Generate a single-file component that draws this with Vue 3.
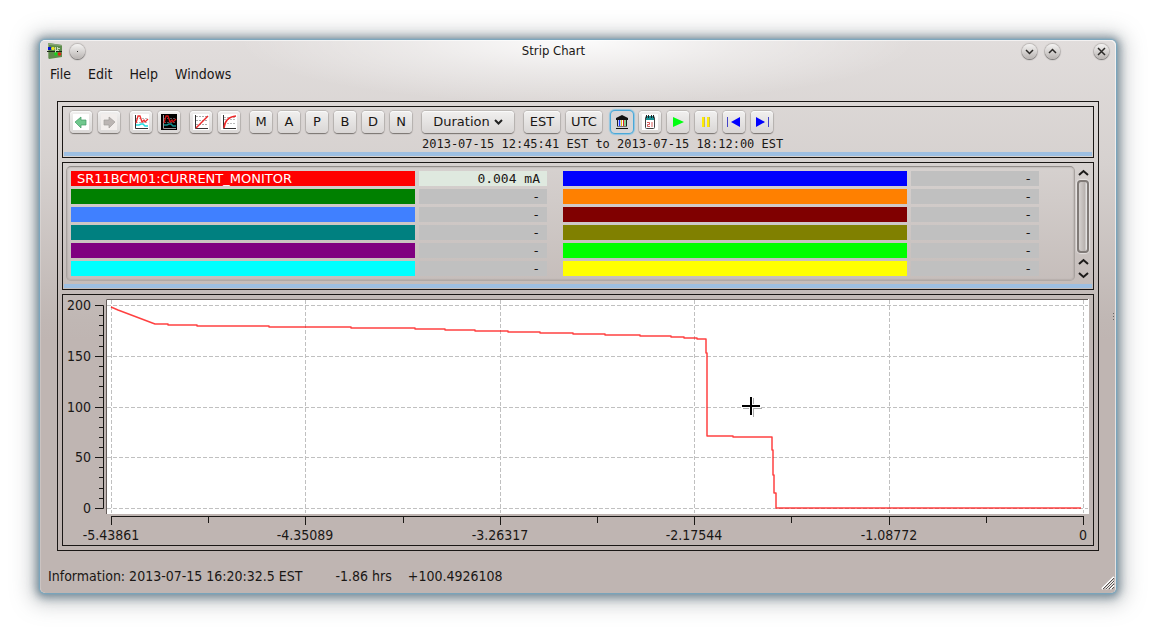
<script setup>
import { ref } from 'vue'

const menus = ['File', 'Edit', 'Help', 'Windows']
const modes = ['M', 'A', 'P', 'B', 'D', 'N']
const columns = [
  [
    { name: 'SR11BCM01:CURRENT_MONITOR', color: '#ff0000', value: '0.004 mA' },
    { name: '', color: '#008000', value: '-' },
    { name: '', color: '#4080ff', value: '-' },
    { name: '', color: '#008080', value: '-' },
    { name: '', color: '#800080', value: '-' },
    { name: '', color: '#00ffff', value: '-' },
  ],
  [
    { name: '', color: '#0000ff', value: '-' },
    { name: '', color: '#ff8000', value: '-' },
    { name: '', color: '#800000', value: '-' },
    { name: '', color: '#808000', value: '-' },
    { name: '', color: '#00ff00', value: '-' },
    { name: '', color: '#ffff00', value: '-' },
  ],
]
const yTicks = [
  { y: 10, label: '200' },
  { y: 61, label: '150' },
  { y: 112, label: '100' },
  { y: 162, label: '50' },
  { y: 213, label: '0' },
]
const yMinor = [20, 30, 40, 51, 71, 81, 91, 102, 122, 132, 142, 152, 172, 182, 193, 203]
const xTicks = [
  { x: 48, label: '-5.43861' },
  { x: 242, label: '-4.35089' },
  { x: 437, label: '-3.26317' },
  { x: 631, label: '-2.17544' },
  { x: 826, label: '-1.08772' },
  { x: 1020, label: '0' },
]
const xMinor = [145, 340, 534, 728, 923]
const trace = 'M48 12L55 15L92 29H105V30H134V31H206V32H288V33H352V34H382V35H412V36H445V37H477V38H510V39H542V40H577V41H608V42H621V43H634V44H643V58H644V141H670V142H709V155H710V180H711V198H713V213H1018'
const local = ref(true)
</script>

<template>
  <div class="desktop">
    <main class="window">
      <header class="titlebar">
        <svg class="app-icon" width="16" height="16" viewBox="0 0 16 16">
          <path d="M1 0L15 2V14L2 16Z" fill="#5d8d4c" />
          <path d="M1 0L15 2V3L2 2V16L1 15Z" fill="#8aa67a" />
          <path d="M0 8.500H15" stroke="#1c2a18" />
          <path d="M8.500 4V10M10.500 4V8M11 5.500H13M9 7.500H12" stroke="#c9d8bb" fill="none" />
          <rect x="1" y="4" width="3" height="3" fill="#0010d0" />
          <circle cx="6" cy="5.500" r="1.700" fill="#f0e428" />
          <circle cx="9" cy="11" r="1.700" fill="#16d61a" />
          <circle cx="12.500" cy="11" r="1.800" fill="#e02818" />
        </svg>
        <button class="round" aria-label="On all desktops"><svg width="15" height="15"><path d="M7 7.500H8" class="dot" /></svg></button>
        <h1>Strip Chart</h1>
        <div class="win-actions">
          <button class="round" aria-label="Minimize"><svg width="15" height="15"><path d="M4 6L7.500 9.500L11 6" /></svg></button>
          <button class="round" aria-label="Maximize"><svg width="15" height="15"><path d="M4 9L7.500 5.500L11 9" /></svg></button>
          <button class="round close" aria-label="Close"><svg width="15" height="15"><path d="M4 4L11 11M11 4L4 11" /></svg></button>
        </div>
      </header>

      <nav class="menubar">
        <button v-for="m in menus" :key="m">{{ m }}</button>
      </nav>

      <div class="frame">
        <section class="panel tools">
          <div class="toolbar">
            <div class="group">
              <button class="btn icon" aria-label="Back"><svg width="16" height="16"><rect width="16" height="16" fill="#fff" /><path d="M2 8L8 3V6H13V11H8V14Z" fill="#6fc78d" stroke="#3f9a61" stroke-width=".7" /></svg></button>
              <button class="btn icon" aria-label="Forward" disabled><svg width="16" height="16"><rect width="16" height="16" fill="#f2eeec" /><path d="M14 8L8 3V6H3V11H8V14Z" fill="#bbb5b3" stroke="#a29d9b" stroke-width=".7" /></svg></button>
            </div>
            <div class="group">
              <button class="btn icon" aria-label="Light plot"><svg width="16" height="16"><rect width="16" height="16" fill="#fff" /><path d="M2.500 1V14.500H15" stroke="#333" fill="none" /><path d="M3 4.500H15M3 8.500H15" stroke="#bbb" stroke-dasharray="2 1" /><path d="M3 11H6L8 10H10L12 12H15" stroke="#20dbe0" stroke-width="1.500" fill="none" /><path d="M3 9L5 2H7L9 8L11 6L12 8L15 5" stroke="#ee3030" fill="none" stroke-width="1.300" /></svg></button>
              <button class="btn icon" aria-label="Dark plot"><svg width="16" height="16"><rect width="16" height="16" fill="#000" /><path d="M2.500 1V14.500H15" stroke="#999" fill="none" /><path d="M3 4.500H15M3 8.500H15" stroke="#555" stroke-dasharray="2 1" /><path d="M3 11H6L8 10H10L12 12H15" stroke="#109090" stroke-width="1.500" fill="none" /><path d="M3 9L5 2H7L9 8L11 6L12 8L15 5" stroke="#d01010" fill="none" stroke-width="1.300" /></svg></button>
            </div>
            <div class="group">
              <button class="btn icon" aria-label="Linear scale"><svg width="16" height="16"><rect width="16" height="16" fill="#fff" /><path d="M3 2.500H15M3 6.500H15M3 10.500H15" stroke="#aaa" stroke-dasharray="2 1" /><path d="M2.500 1V14.500H15" stroke="#333" fill="none" /><path d="M3 14L15 2" stroke="#ee2828" stroke-width="1.500" /></svg></button>
              <button class="btn icon" aria-label="Log scale"><svg width="16" height="16"><rect width="16" height="16" fill="#fff" /><path d="M3 3.500H15M3 5.500H15M3 9.500H15" stroke="#bbb" stroke-dasharray="2 1" /><path d="M2.500 1V14.500H15" stroke="#333" fill="none" /><path d="M3 14Q4 3 15 2" stroke="#ee2828" fill="none" stroke-width="1.500" /></svg></button>
            </div>
            <div class="group">
              <button v-for="m in modes" :key="m" class="btn letter">{{ m }}</button>
            </div>
            <button class="btn duration" aria-haspopup="menu">Duration<svg width="9" height="6"><path d="M1 1L4.500 4.500L8 1" stroke="#222" stroke-width="2" fill="none" /></svg></button>
            <div class="group zones">
              <button class="btn zone">EST</button>
              <button class="btn zone">UTC</button>
            </div>
            <div class="group">
              <button class="btn icon" :class="{ active: local }" aria-label="Archiver" @click="local = !local"><svg width="16" height="16"><path d="M2 4L8 1L14 4V6H2Z" fill="#111" /><rect x="3" y="6" width="10" height="7" fill="#fff" /><path d="M3.500 6V13M12.500 6V13" stroke="#222" /><path d="M5.500 6V12" stroke="#1830ff" stroke-width="1.500" /><path d="M7.500 6V12" stroke="#e8c010" /><path d="M9.500 6V12" stroke="#e02020" /><path d="M11 6V12" stroke="#10a020" /><path d="M3 12.500H13" stroke="#777" /><path d="M2 14.500H14" stroke="#111" /></svg></button>
              <button class="btn icon" aria-label="Calendar"><svg width="16" height="16"><rect width="16" height="16" fill="#fff" /><rect x="3.500" y="2.500" width="9" height="12" rx="1" fill="#fff" stroke="#444" /><rect x="4" y="2" width="8" height="4" fill="#1a8f92" /><path d="M4.500 1V4M6.500 1V4M9.500 1V4M11.500 1V4" stroke="#222" /><path d="M5 8.500H7.500V10.500H5.500V12.500H8M10 8V13" stroke="#c33" fill="none" stroke-width=".8" /></svg></button>
              <button class="btn icon" aria-label="Play"><svg width="16" height="16"><path d="M3 3L14 8L3 13Z" fill="#00ff10" /></svg></button>
              <button class="btn icon" aria-label="Pause"><svg width="16" height="16"><path d="M5 3V13M10 3V13" stroke="#ffee00" stroke-width="2" /><path d="M6.500 3V13M11.500 3V13" stroke="#c4b860" /></svg></button>
              <button class="btn icon" aria-label="Step back"><svg width="16" height="16"><path d="M1.500 3V13" stroke="#4444c8" /><path d="M14 3V13L5 8Z" fill="#0000ff" /></svg></button>
              <button class="btn icon" aria-label="Step forward"><svg width="16" height="16"><path d="M14.500 3V13" stroke="#4444c8" /><path d="M2 3V13L11 8Z" fill="#0000ff" /></svg></button>
            </div>
          </div>
          <p class="range">2013-07-15 12:45:41 EST to 2013-07-15 18:12:00 EST</p>
          <div class="splitter"></div>
        </section>

        <section class="panel signals">
          <div class="signal-area">
            <div class="list">
              <div v-for="(col, c) in columns" :key="c" class="column">
                <div v-for="row in col" :key="row.color" class="row">
                  <span class="name" :style="{ background: row.color }">{{ row.name }}</span>
                  <output class="value" :class="{ live: row.name }">{{ row.value }}</output>
                </div>
              </div>
            </div>
            <div class="scrollbar">
              <button aria-label="Scroll up"><svg width="11" height="8"><path d="M1 6L5.500 2L10 6" /></svg></button>
              <div class="thumb"></div>
              <button aria-label="Scroll up one row"><svg width="11" height="8"><path d="M1 6L5.500 2L10 6" /></svg></button>
              <button aria-label="Scroll down"><svg width="11" height="8"><path d="M1 2L5.500 6L10 2" /></svg></button>
            </div>
          </div>
          <div class="splitter"></div>
        </section>

        <section class="panel chart">
          <svg viewBox="0 0 1030 250" role="img" aria-label="Strip chart">
            <rect x="43" y="4" width="983" height="215" fill="#fff" />
            <path d="M43.500 219V4.500H1025" fill="none" stroke="#655d5a" />
            <g stroke="#c0c0c0" stroke-dasharray="4 2">
              <path v-for="t in yTicks" :key="t.y" :d="`M44 ${t.y + 0.5}H1025`" />
              <path v-for="t in xTicks" :key="t.x" :d="`M${t.x + 0.5} 5V218`" />
            </g>
            <g stroke="#1a1715" fill="none">
              <path d="M32 10.500H40.500V213.500H32" />
              <path v-for="t in yTicks" :key="t.y" :d="`M32 ${t.y + 0.5}H40`" />
              <path v-for="y in yMinor" :key="y" :d="`M36 ${y + 0.5}H40`" />
              <path d="M48 221.500H1021" />
              <path v-for="t in xTicks" :key="t.x" :d="`M${t.x + 0.5} 221V230`" />
              <path v-for="x in xMinor" :key="x" :d="`M${x + 0.5} 221V228`" />
            </g>
            <text v-for="t in yTicks" :key="t.label" x="28" :y="t.y + 5" text-anchor="end">{{ t.label }}</text>
            <text v-for="t in xTicks" :key="t.label" :x="t.x" y="245" text-anchor="middle">{{ t.label }}</text>
            <path :d="trace" fill="none" stroke="#ff0000" stroke-opacity=".75" stroke-width="1.500" stroke-linejoin="round" />
            <path d="M680 113.500H699M690.500 103V122" stroke="#aaa" stroke-width="1" />
            <path d="M678 111H698M688 101V121" stroke="#fff" stroke-width="4" />
            <path d="M679 111H697M688 102V120" stroke="#000" stroke-width="2" />
          </svg>
        </section>
      </div>

      <footer class="status">
        <span>Information: 2013-07-15 16:20:32.5 EST</span>
        <span class="offset">-1.86 hrs</span>
        <span>+100.4926108</span>
      </footer>
      <svg class="edge" width="4" height="9"><path d="M1 1.500h1M1 4.500h1M1 7.500h1" stroke="#666" /></svg>
      <svg class="grip" width="14" height="14"><path d="M1 13L13 1M5 13L13 5M9 13L13 9" stroke="#fff" stroke-width="2" /><path d="M2 13L13 2M5 13L13 5M8 13L13 8M11 13L13 11" stroke="#55504e" /></svg>
    </main>
  </div>
</template>

<style>
body { margin: 0; background: #fff; }
</style>

<style scoped>
* { box-sizing: border-box; }
.desktop { min-height: 100vh; padding: 40px; display: flex; background: #fff; font: 14px/20px "DejaVu Sans Condensed", "DejaVu Sans", sans-serif; color: #1a1715; }
button { font: inherit; color: inherit; border: 0; padding: 0; background: none; }
.window {
  flex: 1; min-width: 0; position: relative; display: flex; flex-direction: column; border-radius: 5px;
  background:
    radial-gradient(ellipse 340px 64px at 50% 0, rgba(255,255,255,.9), rgba(255,255,255,.4) 50%, rgba(255,255,255,0)),
    linear-gradient(#e1dddc, #d6d1cf 125px, #c0b7b4 280px, #bfb5b2 300px);
  box-shadow: inset -1px 1px 0 rgba(255,255,255,.6), inset 1px 0 0 rgba(255,255,255,.2), 0 0 2px 1px #74a9c4, 0 1px 9px 4px rgba(85,110,125,.7), 0 2px 20px 10px rgba(120,125,130,.35);
}
.titlebar { height: 22px; padding: 0 7px; display: flex; align-items: center; gap: 7px; }
h1 { margin: 0; flex: 1; text-align: center; font-size: 13px; font-weight: 400; line-height: 22px; }
.app-icon { flex: none; }
.round { width: 15px; height: 15px; border-radius: 50%; background: linear-gradient(#f4f3f2, #b9b4b2); box-shadow: 0 0 1px 1px rgba(100,95,92,.3), 0 1px 1px rgba(60,60,60,.6); }
.round svg { display: block; fill: none; stroke: #2b2927; stroke-width: 1.500; }
.round .dot { stroke-width: 1; }
.win-actions { display: flex; gap: 8px; }
.close { margin-left: 26px; }
.menubar { height: 24px; padding: 0 10px; display: flex; align-items: center; gap: 17px; }
.frame { flex: 1; margin: 15px 17px 0; padding: 4px; border: 1px solid #1a1715; display: flex; flex-direction: column; gap: 4px; }
.panel { border: 1px solid #1a1715; }
.splitter { height: 4px; margin: 0 1px 1px; background: #9dbfe2; }
.tools { height: 52px; display: flex; flex-direction: column; }
.toolbar { display: flex; gap: 10px; padding: 4px 7px 0; }
.group { display: flex; gap: 6px; }
.btn { height: 22px; border-radius: 4px; display: flex; align-items: center; justify-content: center; background: linear-gradient(#f1f0ef, #d9d6d5); box-shadow: inset 0 1px 0 #fafafa, 0 0 1px 1px rgba(120,115,112,.3), 0 1px 1px rgba(60,55,52,.6); font: 13px/22px "DejaVu Sans", sans-serif; }
.icon, .letter { width: 22px; }
.zones { margin-right: -1px; }
.zone { width: 36px; }
.duration { width: 92px; gap: 4px; }
.active { box-shadow: 0 0 0 1px #4aa8d8, 0 0 1px 2px #8cc4e0; background: #d6d6d8; }
.range { margin: 0 0 0 359px; height: 19px; font: 12px/22px "DejaVu Sans Mono", monospace; white-space: nowrap; }
.signals { padding: 3px 1px 0 3px; }
.signals .splitter { margin: 3px 0 1px -2px; }
.signal-area { display: flex; }
.list { flex: 1; display: flex; gap: 16px; height: 115px; padding: 4px 35px 0 4px; border: 1px solid #928d8a; border-color: #928d8a #a8a29f #b0a9a6; border-radius: 5px; box-shadow: inset 0 0 1px 1px rgba(130,125,122,.2); }
.column { flex: 1; min-width: 0; display: flex; flex-direction: column; gap: 3px; }
.row { display: grid; grid-template-columns: minmax(0, 1fr) 128px; gap: 4px; }
.name { height: 15px; padding-left: 6px; color: #fff; font: 13px/15px "DejaVu Sans", sans-serif; white-space: nowrap; }
.value { height: 15px; padding-right: 7px; text-align: right; background: #c0c0c0; font: 13px/16px "DejaVu Sans Mono", monospace; }
.live { background: #dfe9df; }
.scrollbar { width: 17px; padding-right: 1px; display: flex; flex-direction: column; align-items: center; }
.scrollbar button { height: 13px; display: flex; align-items: center; }
.scrollbar path { stroke: #1d1b1a; stroke-width: 2; fill: none; }
.thumb { width: 12px; flex: 1; margin: 1px 0 2px; border: 2px solid #817b78; border-radius: 4px; background: linear-gradient(90deg, #d5d1cf, #b9b3b0 70%, #eee); box-shadow: 0 0 1px 1px rgba(255,255,255,.5); }
.chart svg { display: block; width: 100%; }
.chart text { fill: #1a1715; font-size: 14px; }
.status { height: 42px; padding: 8px 8px 0; display: flex; align-items: center; white-space: pre; }
.offset { margin: 0 16px 0 33px; }
.edge { position: absolute; right: 0; top: 272px; }
.grip { position: absolute; right: 1px; bottom: 3px; }
</style>
